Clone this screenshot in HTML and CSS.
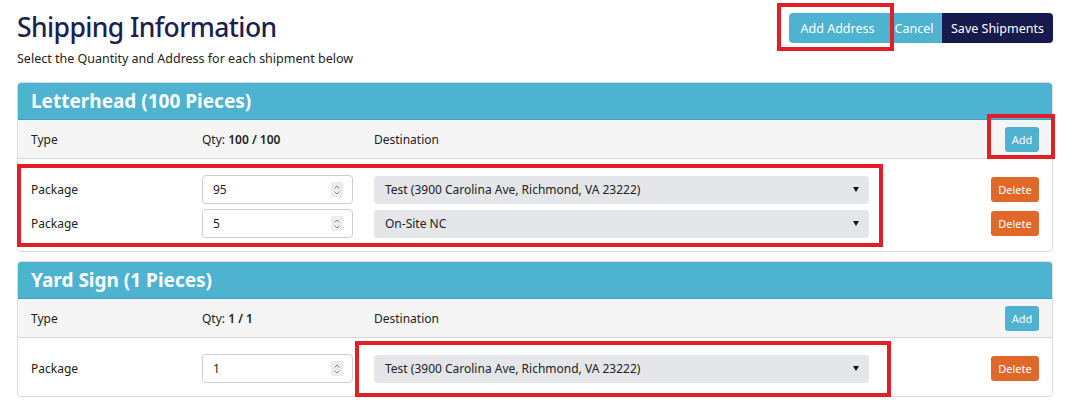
FILE: index.html
```html
<!DOCTYPE html>
<html lang="en">
<head>
<meta charset="utf-8">
<title>Shipping Information</title>
<link rel="stylesheet" href="styles.css">
</head>
<body>
<div class="page">
  <header class="top">
    <div class="titles">
      <h1>Shipping Information</h1>
      <p class="lead">Select the Quantity and Address for each shipment below</p>
    </div>
    <div class="actions">
      <button class="btn btn-addr">Add Address</button>
      <button class="btn btn-cancel">Cancel</button>
      <button class="btn btn-save">Save Shipments</button>
    </div>
  </header>

  <section class="panel">
    <div class="panel-head">Letterhead (100 Pieces)</div>
    <div class="grid sub-row">
      <span>Type</span>
      <span>Qty: <b>100 / 100</b></span>
      <span>Destination</span>
      <span class="cell-end"><button class="sm sm-add">Add</button></span>
    </div>
    <div class="panel-body">
      <div class="grid row">
        <span>Package</span>
        <span><span class="num">95<span class="spin"><svg width="8" height="12" viewBox="0 0 8 12"><path d="M1.5 4.5 L4 2 L6.5 4.5 M1.5 7.5 L4 10 L6.5 7.5" fill="none" stroke="#888" stroke-width="1"/></svg></span></span></span>
        <span class="select"><span>Test (3900 Carolina Ave, Richmond, VA 23222)</span><i class="caret"></i></span>
        <span class="cell-end"><button class="sm sm-del">Delete</button></span>
      </div>
      <div class="grid row">
        <span>Package</span>
        <span><span class="num">5<span class="spin"><svg width="8" height="12" viewBox="0 0 8 12"><path d="M1.5 4.5 L4 2 L6.5 4.5 M1.5 7.5 L4 10 L6.5 7.5" fill="none" stroke="#888" stroke-width="1"/></svg></span></span></span>
        <span class="select"><span>On-Site NC</span><i class="caret"></i></span>
        <span class="cell-end"><button class="sm sm-del">Delete</button></span>
      </div>
    </div>
  </section>

  <section class="panel">
    <div class="panel-head">Yard Sign (1 Pieces)</div>
    <div class="grid sub-row">
      <span>Type</span>
      <span>Qty: <b>1 / 1</b></span>
      <span>Destination</span>
      <span class="cell-end"><button class="sm sm-add">Add</button></span>
    </div>
    <div class="panel-body">
      <div class="grid row">
        <span>Package</span>
        <span><span class="num">1<span class="spin"><svg width="8" height="12" viewBox="0 0 8 12"><path d="M1.5 4.5 L4 2 L6.5 4.5 M1.5 7.5 L4 10 L6.5 7.5" fill="none" stroke="#888" stroke-width="1"/></svg></span></span></span>
        <span class="select"><span>Test (3900 Carolina Ave, Richmond, VA 23222)</span><i class="caret"></i></span>
        <span class="cell-end"><button class="sm sm-del">Delete</button></span>
      </div>
    </div>
  </section>
</div>

<div class="mark mark-addr"></div>
<div class="mark mark-add"></div>
<div class="mark mark-rows"></div>
<div class="mark mark-dest"></div>
</body>
</html>
```

FILE: styles.css
```css
* { box-sizing: border-box; }
body {
  margin: 0;
  background: #fff;
  color: #222;
  font-family: "Noto Sans", "DejaVu Sans", sans-serif;
  font-size: 12px;
}
.page {
  padding: 0 21px 0 17px;
}
.top {
  display: flex;
  justify-content: space-between;
  align-items: flex-start;
  height: 82px;
}
h1 {
  margin: 0;
  padding-top: 9px;
  font-size: 26.5px;
  line-height: 36px;
  font-weight: 500;
  color: #1b1f52;
  letter-spacing: -0.6px;
}
.lead {
  margin: 5px 0 0;
  font-size: 12.5px;
  line-height: 18px;
  color: #222;
}
.actions {
  display: flex;
  margin-top: 13px;
}
.btn {
  height: 30px;
  border: 0;
  padding: 0;
  font-family: inherit;
  font-size: 12.5px;
  color: #fff;
  cursor: pointer;
}
.btn-addr {
  width: 97px;
  background: #4db3d0;
  border-radius: 4px 0 0 4px;
}
.btn-cancel {
  width: 56px;
  background: #4db3d0;
}
.btn-save {
  width: 111px;
  background: #171a4d;
  border-radius: 0 4px 4px 0;
}
.panel {
  border: 1px solid #dcdcdc;
  border-radius: 4px;
  overflow: hidden;
  margin-bottom: 9px;
}
.panel-head {
  height: 37px;
  line-height: 36px;
  padding: 0 13px;
  background: #4db3d0;
  border-bottom: 1px solid #3f9fbc;
  color: #fff;
  font-size: 19px;
  font-weight: 700;
}
.grid {
  display: grid;
  grid-template-columns: 171px 172px 495px 1fr;
  align-items: center;
}
.sub-row {
  height: 39px;
  padding: 0 13px;
  background: #f5f5f5;
  border-bottom: 1px solid #d6d6d6;
}
.sub-row b {
  font-weight: 600;
}
.panel-body {
  display: flex;
  flex-direction: column;
  gap: 5px;
  padding: 16px 13px 13px;
}
.row {
  height: 29px;
}
.cell-end {
  display: flex;
  justify-content: flex-end;
}
.num {
  display: flex;
  align-items: center;
  width: 151px;
  height: 29px;
  padding-left: 10px;
  border: 1px solid #cfcfcf;
  border-radius: 4px;
  background: #fff;
}
.spin {
  display: flex;
  align-items: center;
  justify-content: center;
  margin-left: auto;
  margin-right: 9px;
  width: 12px;
  height: 15px;
  background: #ececec;
}
.select {
  display: flex;
  align-items: center;
  justify-content: space-between;
  width: 495px;
  height: 28px;
  padding: 0 10px 0 11px;
  background: #e4e6ea;
  border-radius: 4px;
  color: #222;
}
.caret {
  width: 0;
  height: 0;
  border-left: 3.5px solid transparent;
  border-right: 3.5px solid transparent;
  border-top: 5px solid #111;
}
.sm {
  height: 25px;
  border: 0;
  border-radius: 3px;
  padding: 0;
  font-family: inherit;
  font-size: 11px;
  color: #fff;
}
.sm-add {
  width: 34px;
  background: #4db3d0;
}
.sm-del {
  width: 48px;
  background: #e0692a;
}
.mark {
  position: absolute;
  border: 4px solid #e21e26;
  pointer-events: none;
}
.mark-addr { left: 777px; top: 3px; width: 117px; height: 48px; }
.mark-add { left: 987px; top: 114px; width: 68px; height: 45px; }
.mark-rows { left: 17px; top: 164px; width: 866px; height: 83px; }
.mark-dest { left: 355px; top: 341px; width: 536px; height: 56px; }
```
